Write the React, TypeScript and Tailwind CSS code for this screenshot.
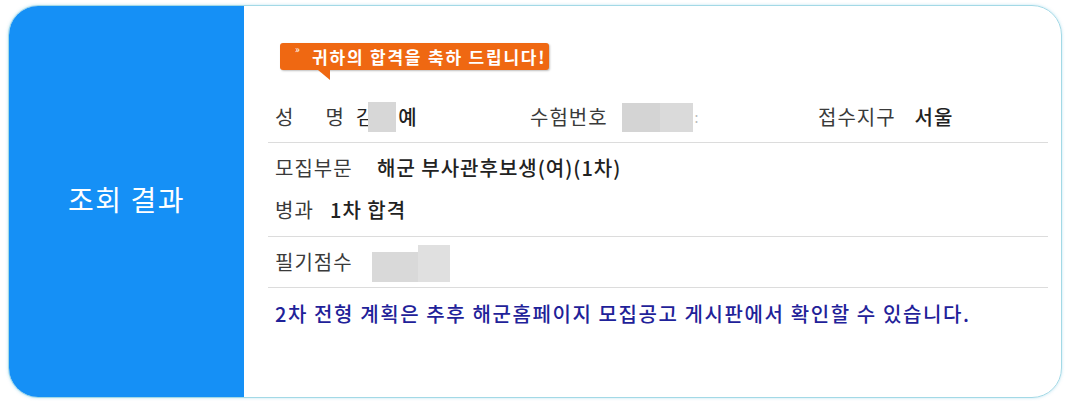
export default function App() {
  return (
    <div
      className="w-[1070px] h-[405px] bg-white pt-[5px] pl-[8px]"
      style={{ fontFamily: '"Noto Sans CJK KR", "Noto Sans", sans-serif' }}
    >
      <div className="flex w-[1054px] h-[393px] rounded-[30px] border border-[#a3d9e6] overflow-hidden shadow-[0_0_3px_rgba(120,200,230,0.5)]">
        {/* left title panel */}
        <div className="w-[235px] shrink-0 bg-[#1590f6] flex items-center justify-center">
          <span className="text-white text-[28px] tracking-[1.5px] -mt-[6px]">조회 결과</span>
        </div>

        {/* result area */}
        <div className="flex-1 flex flex-col pl-[24px] pr-[13px] pt-[37px] text-[20px] leading-[24px] tracking-[1px] text-[#3a3a3a]">
          {/* speech bubble */}
          <div className="h-[37px] pl-[12px]">
            <div className="relative flex items-center h-[27px] w-[269px] rounded-[3px] bg-[#ef6812] pl-[32px] shadow-[1px_1px_2px_rgba(0,0,0,0.25)]">
              <span className="absolute left-[15px] top-[1px] text-[10px] leading-[10px] text-white">»</span>
              <span className="text-white text-[17px] leading-[20px] font-bold tracking-[1.8px] whitespace-nowrap">
                귀하의 합격을 축하 드립니다!
              </span>
              <span className="absolute left-[38px] top-[27px] w-0 h-0 border-t-[10px] border-t-[#ef6812] border-l-[12px] border-l-transparent" />
            </div>
          </div>

          {/* name / number / region */}
          <div className="flex h-[62px] pt-[12px] pl-[7px]">
            <div className="w-[255px] flex items-center">
              <span>성</span>
              <span className="ml-[31px]">명</span>
              <span className="ml-[11px] text-[#222]">김</span>
              <span className="inline-block w-[28px] h-[30px] -ml-[7px] bg-[#d7d7d7]" />
              <span className="ml-[2px] text-[#222] font-medium">예</span>
            </div>
            <div className="w-[288px] flex items-center">
              <span>수험번호</span>
              <span className="ml-[14px] flex h-[29px]">
                <span className="w-[38px] bg-[#d4d4d4]" />
                <span className="w-[33px] bg-[#dadada]" />
              </span>
              <span className="ml-[2px] text-[#bbb] text-[14px]">:</span>
            </div>
            <div className="flex items-center">
              <span>접수지구</span>
              <span className="ml-[19px] text-[#222] font-medium">서울</span>
            </div>
          </div>
          <div className="h-px bg-[#dcdcdc]" />

          {/* division / branch */}
          <div className="flex flex-col gap-[18px] pt-[13px] pb-[14px] pl-[7px]">
            <div className="flex">
              <span className="w-[102px]">모집부문</span>
              <span className="text-[#222] font-medium">해군 부사관후보생(여)(1차)</span>
            </div>
            <div className="flex">
              <span className="w-[55px]">병과</span>
              <span className="text-[#222] font-medium">1차 합격</span>
            </div>
          </div>
          <div className="h-px bg-[#dcdcdc]" />

          {/* written score */}
          <div className="flex items-center h-[50px] pl-[7px]">
            <span className="w-[97px]">필기점수</span>
            <span className="flex items-end">
              <span className="w-[46px] h-[30px] bg-[#d9d9d9] mt-[9px]" />
              <span className="w-[32px] h-[37px] bg-[#e0e0e0] -mt-[2px]" />
            </span>
          </div>
          <div className="h-px bg-[#dcdcdc]" />

          {/* notice */}
          <div className="pt-[14px] pl-[7px]">
            <span className="text-[#1f2299] font-medium tracking-[1.6px] whitespace-nowrap">
              2차 전형 계획은 추후 해군홈페이지 모집공고 게시판에서 확인할 수 있습니다.
            </span>
          </div>
        </div>
      </div>
    </div>
  );
}
